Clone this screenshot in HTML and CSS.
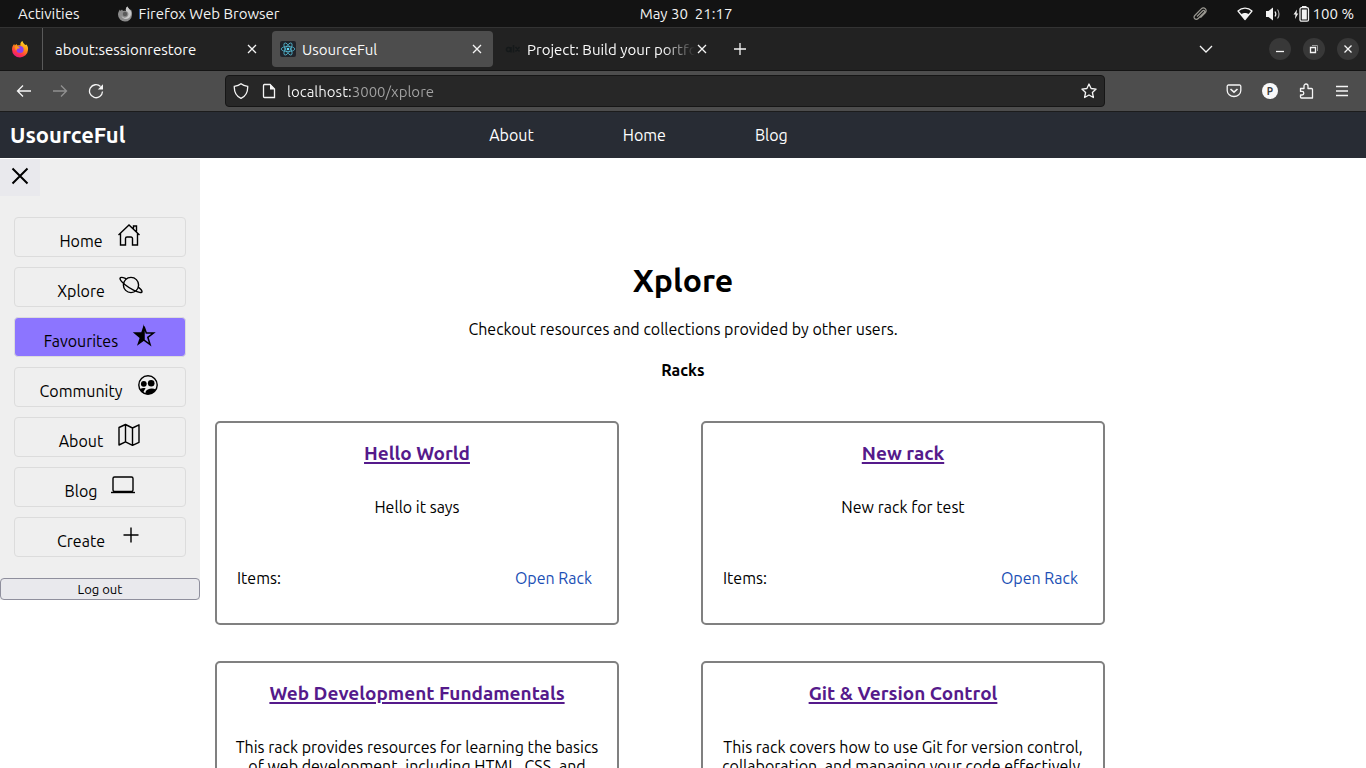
FILE: index.html
```html
<!DOCTYPE html>
<html lang="en">
<head>
<meta charset="utf-8">
<title>UsourceFul</title>
<link rel="stylesheet" href="styles.css">
</head>
<body>
<div class="screen">
  <div class="topbar">
    <div class="topbar-left">
      <button class="topbar-item">Activities</button>
      <button class="topbar-item topbar-app">
        <svg width="16" height="16" viewBox="0 0 16 16"><path fill="#8b8b8b" d="M8 15.5A7 7 0 0 1 1 8.500C1 6.500 2 4.500 3 3.500L3.500 5 5 3.500 6 5c1-.5 2-.5 3 0C8.500 3 9 1.500 10.500.500 11 2 12 2.500 13 4L14 3.500C15 5.500 15.200 7 15 9a7 7 0 0 1-7 6.500z"/><path fill="#c9c9c9" d="M10.500.5C9 1.500 8.500 3 9 5c3 1 3.500 5 0 6.500-2 .5-4-.5-4.500-2C5 13 9 14 12 12c2.500-2 3-6 1-8-1-1.500-2-2-2.500-3.500z"/><circle cx="8" cy="8" r="2.200" fill="#5b5b5b"/></svg>
        <span>Firefox Web Browser</span>
      </button>
    </div>
    <button class="topbar-item">May 30&nbsp; 21:17</button>
    <div class="topbar-right">
      <svg class="clip" width="16" height="16" viewBox="0 0 16 16" fill="none" stroke="#9a9891" stroke-width="1.200"><path d="M5 10.500 10.500 5c1.500-1.500 3 .2 1.700 1.500l-6 6C3.800 14.800.5 12 2.800 9.500L9 3.200c3-3 7 .5 4.200 3.600L8.500 11.500"/></svg>
      <svg class="wifi" width="16" height="16" viewBox="0 0 16 16"><path d="M1 5C5 1.200 11 1.200 15 5L8 13.500z" fill="none" stroke="#f2f2f2" stroke-width="1.300" stroke-linejoin="round"/><path d="M3.800 8.500C6 6.500 10 6.500 12.200 8.500L8 13.500z" fill="#f2f2f2"/></svg>
      <svg class="sound" width="16" height="16" viewBox="0 0 16 16"><path d="M1 5h2.500L8 1.500v13L3.500 11H1z" fill="#f2f2f2"/><g fill="none" stroke="#f2f2f2" stroke-width="1.200"><path d="M10 5.500c1 1.500 1 3.500 0 5"/><path stroke="#aaa" d="M12.500 3.500c2 2.500 2 6.500 0 9"/></g></svg>
      <svg width="18" height="16" viewBox="0 0 18 16"><path d="M5 3.500 1.500 8.500h2L3 13l3.300-5.500H4.500z" fill="#f2f2f2"/><rect x="8" y="1.700" width="8.500" height="13.500" rx="1.500" fill="none" stroke="#f2f2f2" stroke-width="1.300"/><path d="M9.800 3.500h5v10h-5zM10 0h4.500v2H10z" fill="#f2f2f2"/></svg>
      <span>100 %</span>
    </div>
  </div>

  <div class="tabstrip">
    <button class="pinned" aria-label="Firefox">
      <svg width="18" height="18" viewBox="0 0 18 18"><defs><linearGradient id="fox" x1="0.8" y1="0" x2="0.3" y2="1"><stop offset="0" stop-color="#ffe226"/><stop offset=".45" stop-color="#ff8a16"/><stop offset=".75" stop-color="#ff3647"/><stop offset="1" stop-color="#e31587"/></linearGradient></defs><path fill="url(#fox)" d="M9 17.500A8 8 0 0 1 1 9.500C1 7 2 5 3.200 4L3.700 5.500 5.500 4 6.500 5.500c1-.5 2-.5 3 0C9 3.500 9.700 2 11.500 1c.5 2 1.500 2.500 2.700 4L15.500 4.500C17 6.500 17.200 8 17 10a8 8 0 0 1-8 7.500z"/><circle cx="9" cy="9.500" r="3.600" fill="#8a3ff0"/><path d="M4 6.500c2-.5 4 0 5 1.500-1 .5-2 1-3 .8 0 2-1 1.700-1.500 1z" fill="#ff9a1b"/></svg>
    </button>
    <div class="tabs">
      <div class="tab">
        <button class="tab-label">about:sessionrestore</button>
        <button class="tab-close" aria-label="Close tab"><svg width="10" height="10" viewBox="0 0 10 10"><path d="M1 1l8 8M9 1L1 9"/></svg></button>
      </div>
      <div class="tab tab-active">
        <svg width="16" height="16" viewBox="0 0 16 16"><rect width="16" height="16" rx="2" fill="#20232a"/><g fill="none" stroke="#52b6cf" stroke-width=".8"><ellipse cx="8" cy="8" rx="6.800" ry="2.600"/><ellipse cx="8" cy="8" rx="6.800" ry="2.600" transform="rotate(60 8 8)"/><ellipse cx="8" cy="8" rx="6.800" ry="2.600" transform="rotate(120 8 8)"/></g><circle cx="8" cy="8" r="1.300" fill="#61dafb"/></svg>
        <button class="tab-label">UsourceFul</button>
        <button class="tab-close" aria-label="Close tab"><svg width="10" height="10" viewBox="0 0 10 10"><path d="M1 1l8 8M9 1L1 9"/></svg></button>
      </div>
      <div class="tab">
        <svg width="16" height="16" viewBox="0 0 16 16" fill="none" stroke="#15191a" stroke-width="1.500"><circle cx="3.500" cy="8.500" r="2"/><path d="M6 6v5.500M8.500 4v7.500M10.500 6l4 4.500M14.500 6l-4 4.500"/></svg>
        <button class="tab-label tab-fade">Project: Build your portfolio</button>
        <button class="tab-close" aria-label="Close tab"><svg width="10" height="10" viewBox="0 0 10 10"><path d="M1 1l8 8M9 1L1 9"/></svg></button>
      </div>
      <button class="tool" aria-label="New tab"><svg width="14" height="14" viewBox="0 0 14 14"><path d="M7 1v12M1 7h12"/></svg></button>
    </div>
    <button class="tool tab-list" aria-label="List all tabs"><svg width="14" height="14" viewBox="0 0 14 14"><path d="M1 4l6 6 6-6"/></svg></button>
    <div class="window-buttons">
      <button class="round" aria-label="Minimize"><svg width="10" height="10" viewBox="0 0 10 10"><path d="M1 7.500h8"/></svg></button>
      <button class="round" aria-label="Restore"><svg width="10" height="10" viewBox="0 0 10 10"><path d="M1.500 3.500h5v5h-5z"/><path d="M3 1.500h5.500V7" stroke="#999" stroke-width="1"/></svg></button>
      <button class="round" aria-label="Close"><svg width="10" height="10" viewBox="0 0 10 10"><path d="M1.500 1.500l7 7M8.500 1.500l-7 7"/></svg></button>
    </div>
  </div>

  <div class="toolbar">
    <button class="tool" aria-label="Back"><svg width="16" height="16" viewBox="0 0 16 16"><path d="M15 8H1.500M7 2.500L1.500 8 7 13.500"/></svg></button>
    <button class="tool tool-off" aria-label="Forward"><svg width="16" height="16" viewBox="0 0 16 16"><path d="M1 8h13.500M9 2.500L14.500 8 9 13.500"/></svg></button>
    <button class="tool" aria-label="Reload"><svg width="16" height="16" viewBox="0 0 16 16"><path d="M14.500 8.500A6.500 6.500 0 1 1 12.500 3.500"/><path d="M9.800 6.500h5.200V1.200z" fill="#f5f5f5" stroke="none"/></svg></button>
    <div class="urlbar">
      <svg width="16" height="16" viewBox="0 0 16 16"><path d="M8 .800c2 1.700 4.500 2.300 6.700 2.600C14.900 8.500 13 13 8 15.300 3 13 1.100 8.500 1.300 3.400 3.500 3.100 6 2.500 8 .800z"/></svg>
      <svg width="16" height="16" viewBox="0 0 16 16"><path d="M3 1.500h6L13.500 6v8.500H3.500a1 1 0 0 1-1-1V2.500a1 1 0 0 1 1-1z"/><path d="M9 1v5.500h5z" fill="#f5f5f5" stroke="none"/></svg>
      <input class="url" type="text" aria-label="Address" value="localhost:3000/xplore">
      <button class="bookmark" aria-label="Bookmark this page"><svg width="16" height="16" viewBox="0 0 16 16"><path stroke-linejoin="round" d="M8 1l2.100 4.500 5 .6-3.700 3.400 1 5L8 12l-4.400 2.500 1-5L.9 6.100l5-.6z"/></svg></button>
    </div>
    <button class="tool" aria-label="Pocket"><svg width="16" height="16" viewBox="0 0 16 16"><path d="M2.500 2h11A1.300 1.300 0 0 1 14.800 3.300V7.500a6.800 6 0 0 1-13.600 0V3.300A1.300 1.300 0 0 1 2.500 2z"/><path d="M4.500 6L8 9.200 11.500 6" stroke-width="1.600"/></svg></button>
    <button class="tool" aria-label="Profile"><span class="avatar">P</span></button>
    <button class="tool" aria-label="Extensions"><svg width="16" height="16" viewBox="0 0 16 16"><path stroke-linejoin="round" d="M2.500 5.500h3.500V3a2 2 0 0 1 4 0v2.500h3.500a1 1 0 0 1 1 1v8.500H3.500a1 1 0 0 1-1-1V12h1.500a1.800 1.800 0 0 0 0-3.600H2.500z"/></svg></button>
    <button class="tool" aria-label="Menu"><svg width="14" height="14" viewBox="0 0 14 14"><path d="M1 2.500h12M1 7h12M1 11.500h12"/></svg></button>
  </div>

  <div class="page">
    <header class="site-header">
      <a class="brand" href="#">UsourceFul</a>
      <nav class="site-nav">
        <a href="#">About</a>
        <a href="#">Home</a>
        <a href="#">Blog</a>
      </nav>
    </header>
    <div class="layout">
      <aside class="sidebar">
        <button class="close-menu" aria-label="Close menu"><svg width="24" height="24" viewBox="0 0 24 24"><path d="M4.500 4.500l15 15M19.500 4.500l-15 15"/></svg></button>
        <nav class="menu">
          <a class="menu-item" href="#"><span>Home</span><svg width="24" height="24" viewBox="0 0 24 24"><path d="M1.500 12L12 2l10.500 10M3.500 10.500V22h5v-6.500A1.500 1.500 0 0 1 10 14h4a1.500 1.500 0 0 1 1.500 1.500V22h5V10.500M16.500 5.500V3h3v5.500"/></svg></a>
          <a class="menu-item" href="#"><span>Xplore</span><svg width="24" height="24" viewBox="0 0 24 24"><circle cx="12" cy="12" r="7.600"/><path d="M7.500 5.800C4 4 1 3.800 1 5.500c0 3 8 9 14 11.800 4 1.900 8 3 8 1.500 0-1.300-1.500-3-3.800-4.700"/></svg></a>
          <a class="menu-item menu-item-active" href="#"><span>Favourites</span><svg width="24" height="24" viewBox="0 0 24 24"><path d="M12 3.500l2.300 6.500h7.200l-5.700 4.300 2.300 7.200L12 17.200z" stroke-width="1.500"/><path d="M12 1v16.800l-7 5L7.600 15 .8 9.300h8.500z" fill="#000" stroke="none"/></svg></a>
          <a class="menu-item" href="#"><span>Community</span><svg width="24" height="24" viewBox="0 0 24 24"><circle cx="12" cy="12" r="9.200"/><g fill="#000" stroke="none"><circle cx="7.800" cy="10.800" r="2.900"/><circle cx="15.200" cy="10.200" r="3.300"/><path d="M4 16.200c1.700-1.200 3.800-1.500 5.600-.900L7.600 18.500 8 20.500C6 19.500 4.700 18 4 16.200zM9.500 21v-2c1-3 6.500-4.500 10.300-2.500C18 20 13.500 22 9.500 21z"/></g></svg></a>
          <a class="menu-item" href="#"><span>About</span><svg width="24" height="24" viewBox="0 0 24 24"><path stroke-linejoin="round" d="M2 4.500l6.500-3 7 3.500L22 1.800v17.500l-6.500 3-7-3.500L2 22zM8.500 1.500v17.300M15.500 5v17.300"/></svg></a>
          <a class="menu-item" href="#"><span>Blog</span><svg width="24" height="24" viewBox="0 0 24 24"><rect x="2" y="4" width="20" height="14.500" rx="1.500"/><path d="M0 19.500h24"/></svg></a>
          <a class="menu-item" href="#"><span>Create</span><svg width="24" height="24" viewBox="0 0 24 24"><path d="M12 4.500v15M4.500 12h15"/></svg></a>
        </nav>
        <button class="logout">Log out</button>
      </aside>
      <main class="content">
        <section class="intro">
          <h1>Xplore</h1>
          <p>Checkout resources and collections provided by other users.</p>
          <h2>Racks</h2>
        </section>
        <section class="racks">
          <article class="rack">
            <h3><a href="#">Hello World</a></h3>
            <p>Hello it says</p>
            <div class="rack-foot"><span>Items:</span><a href="#">Open Rack</a></div>
          </article>
          <article class="rack">
            <h3><a href="#">New rack</a></h3>
            <p>New rack for test</p>
            <div class="rack-foot"><span>Items:</span><a href="#">Open Rack</a></div>
          </article>
          <article class="rack">
            <h3><a href="#">Web Development Fundamentals</a></h3>
            <p>This rack provides resources for learning the basics of web development, including HTML, CSS, and</p>
            <div class="rack-foot"><span>Items:</span><a href="#">Open Rack</a></div>
          </article>
          <article class="rack">
            <h3><a href="#">Git &amp; Version Control</a></h3>
            <p>This rack covers how to use Git for version control, collaboration, and managing your code effectively.</p>
            <div class="rack-foot"><span>Items:</span><a href="#">Open Rack</a></div>
          </article>
        </section>
      </main>
    </div>
  </div>
</div>
</body>
</html>
```
FILE: styles.css
```css
* { box-sizing: border-box; }

body {
  margin: 0;
  background: #fff;
  color: #000;
  font: 16px/18px Ubuntu, "Noto Sans", sans-serif;
}

button, input {
  font: inherit;
  color: inherit;
  background: none;
  border: 0;
  padding: 0;
  margin: 0;
}

a { color: inherit; text-decoration: none; }
svg { display: block; flex: none; }
h1, h2, h3, p { margin: 0; }

.screen {
  display: flex;
  flex-direction: column;
  height: 100vh;
  overflow: hidden;
}

/* Desktop bar */
.topbar {
  display: grid;
  grid-template-columns: 1fr auto 1fr;
  align-items: center;
  flex: none;
  height: 28px;
  padding: 0 12px 0 18px;
  background: #131313;
  border-bottom: 1px solid #333;
  color: #f2f2f2;
  font-size: 15px;
}
.topbar-left, .topbar-right, .topbar-app { display: flex; align-items: center; }
.topbar-left { gap: 37px; }
.topbar-app { gap: 6px; }
.topbar-right { justify-content: flex-end; }
.clip { margin-right: 29px; }
.wifi { margin-right: 12px; }
.sound { margin-right: 11px; }
.topbar-right span { margin-left: 3px; }

/* Tabs */
.tabstrip {
  display: flex;
  align-items: center;
  flex: none;
  height: 43px;
  padding-right: 7px;
  background: #222;
  border-bottom: 1px solid #141414;
  color: #fbfbfb;
  font-size: 15px;
}
.pinned {
  display: grid;
  place-items: center;
  align-self: stretch;
  width: 43px;
  padding-right: 3px;
  border-right: 1px solid #5a5a5a;
}
.tabs { display: flex; flex: 1; gap: 4px; padding-left: 4px; min-width: 0; }
.tab {
  display: flex;
  align-items: center;
  flex: 0 1 221px;
  gap: 6px;
  min-width: 0;
  height: 36px;
  padding: 0 11px 0 8px;
  border-radius: 4px;
}
.tab-active { background: #4d4d4d; }
.tab-label { flex: 1; min-width: 0; padding-top: 2px; overflow: hidden; white-space: nowrap; text-align: left; }
.tab-fade { margin-right: -4px; mask-image: linear-gradient(to left, transparent, #000 32px); }
.tab-close svg, .tool svg, .round svg, .urlbar svg { fill: none; stroke: #f5f5f5; stroke-width: 1.3; }
.tool { display: grid; place-items: center; width: 36px; height: 36px; }
.tool-off { opacity: .4; }
.tab-list { margin-right: 45px; }
.window-buttons { display: flex; gap: 12px; }
.round {
  display: grid;
  place-items: center;
  width: 22px;
  height: 22px;
  border-radius: 50%;
  background: #383838;
}

/* Navigation */
.toolbar {
  display: flex;
  align-items: center;
  flex: none;
  height: 41px;
  padding: 0 6px;
  background: #4d4d4d;
  border-bottom: 1px solid #1c1c1c;
}
.urlbar {
  display: flex;
  align-items: center;
  flex: 1;
  gap: 12px;
  height: 32px;
  margin: 0 111px;
  padding: 0 7px;
  background: #272727;
  border: 1px solid #161616;
  border-radius: 4px;
}
.url {
  flex: 1;
  min-width: 0;
  margin-left: -2px;
  padding-top: 2px;
  background: linear-gradient(to right, #fbfbfb 64px, #a3a3a3 64px) text;
  -webkit-text-fill-color: transparent;
  font-size: 15px;
}
.avatar {
  display: grid;
  place-items: center;
  width: 16px;
  height: 16px;
  border-radius: 50%;
  background: #f9f9fa;
  color: #3c3c3c;
  font-size: 10px;
  font-weight: 700;
}

/* Site */
.page { flex: 1; min-height: 0; overflow: hidden; }
.site-header {
  display: grid;
  grid-template-columns: 1fr auto 1fr;
  align-items: center;
  height: 46px;
  padding: 0 99px 0 10px;
  background: #282c34;
  color: #fff;
}
.brand { font-size: 22px; line-height: 24px; font-weight: 700; }
.site-nav { display: flex; gap: 89px; }
.layout { display: flex; align-items: flex-start; padding-top: 1px; }

.sidebar { flex: none; width: 200px; background: #efefef; }
.close-menu {
  display: grid;
  justify-items: center;
  width: 40px;
  height: 37px;
  padding-top: 5px;
  background: #e9e9ed;
}
.close-menu svg { fill: none; stroke: #000; stroke-width: 2; }
.menu { display: grid; gap: 10px; padding: 21px 14px; }
.menu-item {
  display: flex;
  align-items: center;
  justify-content: center;
  gap: 14px;
  height: 40px;
  border: 1px solid #dcdcdc;
  border-radius: 4px;
}
.menu-item span { padding-top: 8px; }
.menu-item svg { margin-bottom: 4px; fill: none; stroke: #000; stroke-width: 1.4; }
.menu-item-active { background: #8c75ff; }
.logout {
  display: block;
  width: 100%;
  height: 22px;
  background: #e9e9ed;
  border: 1px solid #8f8f9d;
  border-radius: 4px;
  font-size: 13px;
}

.content { flex: 1; min-width: 0; }
.intro { padding: 103px 200px 0 0; text-align: center; }
.intro h1 { font-size: 32px; line-height: 36px; }
.intro p { margin-top: 22px; }
.intro h2 { margin-top: 23px; font-size: 16px; line-height: 18px; }
.racks {
  display: grid;
  grid-template-columns: 1fr 1fr;
  gap: 36px 82px;
  padding: 42px 261px 36px 15px;
}
.rack {
  display: flex;
  flex-direction: column;
  min-height: 204px;
  padding: 19px 14px 36px;
  border: 2px solid #808080;
  border-radius: 5px;
  text-align: center;
}
.rack h3 { font-size: 19px; line-height: 22px; color: #551a8b; }
.rack h3 a { text-decoration: underline 2px; text-underline-offset: 2px; }
.rack p { margin-top: 34px; line-height: 19px; }
.rack-foot {
  display: flex;
  justify-content: space-between;
  margin-top: auto;
  padding: 0 11px 0 6px;
}
.rack-foot a { color: #1b4fb5; }
```
